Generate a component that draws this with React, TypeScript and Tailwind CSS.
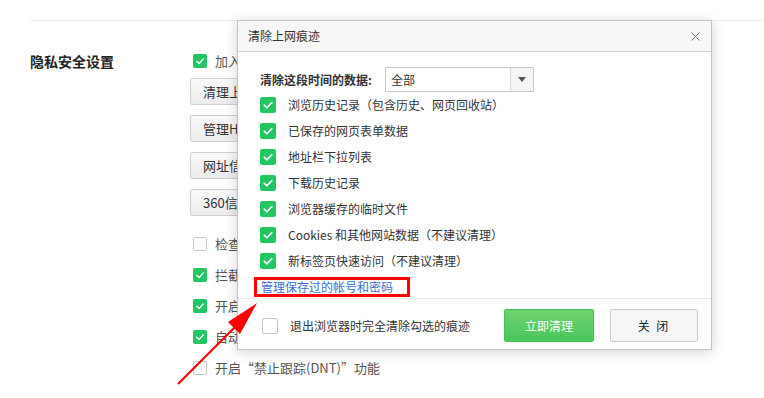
import { X } from 'lucide-react'

const font = { fontFamily: '"Microsoft YaHei", "Noto Sans CJK SC", sans-serif' }

function Check({ on, size = 16 }: { on: boolean; size?: number }) {
  const box = size === 16 ? 'w-4 h-4' : 'w-[14px] h-[14px]'
  if (!on) return <span className={`${box} shrink-0 rounded-[2px] border border-[#c6c6c6] bg-white`} />
  return (
    <span className={`${box} shrink-0 rounded-[2px] bg-[#22c763] flex items-center justify-center`}>
      <svg viewBox="0 0 16 16" className="w-full h-full">
        <path d="M4.2 8.2 L7 10.8 L11.8 5.6" fill="none" stroke="#fff" strokeWidth="1.6" strokeLinecap="round" strokeLinejoin="round" />
      </svg>
    </span>
  )
}

const bgButtons = ['清理上网痕迹', '管理HTTPS/SSL证书', '网址信任列表', '360信任列表']
const bgChecks: [boolean, string][] = [
  [false, '检查下载文件的安全性'],
  [true, '拦截恶意网址和钓鱼网站'],
  [true, '开启网页安全防护'],
  [true, '自动阻止恶意插件'],
  [false, '开启“禁止跟踪(DNT)”功能'],
]

const items = [
  '浏览历史记录（包含历史、网页回收站）',
  '已保存的网页表单数据',
  '地址栏下拉列表',
  '下载历史记录',
  '浏览器缓存的临时文件',
  'Cookies 和其他网站数据（不建议清理）',
  '新标签页快速访问（不建议清理）',
]

export default function App() {
  return (
    <div className="relative w-[764px] h-[398px] bg-white overflow-hidden text-[#333]" style={font}>
      {/* page behind the dialog */}
      <div className="pt-[20px] pl-[30px]">
        <div className="border-t border-[#eeeeee]" />
        <div className="flex">
          <div className="w-[160px] pt-[30px] text-[14px] font-bold text-[#222] leading-5">隐私安全设置</div>
          <div className="flex flex-col w-[47px] overflow-hidden">
            <div className="flex items-center gap-2 h-[20px] mt-[30px] pl-[3px] text-[13px] text-[#555] whitespace-nowrap">
              <Check on size={14} />
              <span>加入360安全网址云服务</span>
            </div>
            <div className="flex flex-col gap-[10px] mt-[7px]">
              {bgButtons.map((b) => (
                <div key={b} className="h-[27px] w-[150px] shrink-0 flex items-center px-[12px] border border-[#cfcfcf] rounded-[2px] bg-gradient-to-b from-[#fafafa] to-[#ececec] text-[13px] text-[#333] whitespace-nowrap">{b}</div>
              ))}
            </div>
            <div className="flex flex-col mt-[12px]">
              {bgChecks.slice(0, 4).map(([on, t], i) => (
                <div key={i} className="flex items-center gap-2 h-[31px] pl-[3px] text-[13px] text-[#555] whitespace-nowrap">
                  <Check on={on} size={14} />
                  <span>{t}</span>
                </div>
              ))}
            </div>
          </div>
        </div>
        <div className="flex items-center gap-2 h-[31px] pl-[163px] text-[13px] text-[#555] whitespace-nowrap">
          <Check on={bgChecks[4][0]} size={14} />
          <span>{bgChecks[4][1]}</span>
        </div>
      </div>

      {/* dialog */}
      <div className="absolute left-[237px] top-[20px] w-[475px] h-[330px] bg-white border border-[#c4c4c4] shadow-[0_2px_12px_rgba(0,0,0,0.18)] flex flex-col">
        <div className="h-[31px] shrink-0 bg-[#f7f7f7] border-b border-[#d3d3d3] flex items-center justify-between pl-[10px] pr-[8px] text-[12px] text-[#333]">
          <span>清除上网痕迹</span>
          <X size={15} strokeWidth={1.3} className="text-[#555]" />
        </div>
        <div className="flex-1 pl-[22px] pt-[15px] text-[12px]">
          <div className="flex items-center h-[25px]">
            <span className="w-[125px] font-bold text-[#333]">清除这段时间的数据:</span>
            <div className="w-[149px] h-[25px] border border-[#c9c9c9] flex">
              <span className="flex-1 flex items-center pl-[5px] text-[#333]">全部</span>
              <span className="w-[23px] border-l border-[#d9d9d9] bg-[#f5f5f5] flex items-center justify-center">
                <span className="w-0 h-0 border-l-[4px] border-r-[4px] border-t-[5px] border-l-transparent border-r-transparent border-t-[#555]" />
              </span>
            </div>
          </div>
          <div className="flex flex-col">
            {items.map((t) => (
              <div key={t} className="flex items-center h-[26px] gap-[12px]">
                <Check on />
                <span className="text-[#333]">{t}</span>
              </div>
            ))}
          </div>
          <div className="mt-[3px] -ml-[6px] w-[156px] h-[20px] border-[3px] border-[#ff0000] flex items-center pl-[4px]">
            <span className="text-[#3a6fd6] whitespace-nowrap">管理保存过的帐号和密码</span>
          </div>
        </div>
        <div className="h-[51px] shrink-0 border-t border-[#e6e6e6] flex items-start pt-[10px] pl-[24px] pr-[13px] text-[12px]">
          <div className="flex items-center gap-[12px] h-[33px]">
            <Check on={false} />
            <span className="text-[#333]">退出浏览器时完全清除勾选的痕迹</span>
          </div>
          <div className="ml-auto flex gap-[16px]">
            <div className="w-[90px] h-[33px] rounded-[2px] border border-[#4cbf58] bg-gradient-to-b from-[#6fd36f] to-[#47c65c] text-white flex items-center justify-center">立即清理</div>
            <div className="w-[88px] h-[33px] rounded-[2px] border border-[#cccccc] bg-[#f6f6f6] text-[#222] flex items-center justify-center tracking-[2px]">关 闭</div>
          </div>
        </div>
      </div>

      {/* annotation arrow */}
      <svg className="absolute inset-0 pointer-events-none" width="764" height="398">
        <line x1="178" y1="384" x2="236" y2="326" stroke="#ff0000" strokeWidth="2.2" />
        <polygon points="257,303 228,322 240,334" fill="#ff0000" />
      </svg>
    </div>
  )
}
